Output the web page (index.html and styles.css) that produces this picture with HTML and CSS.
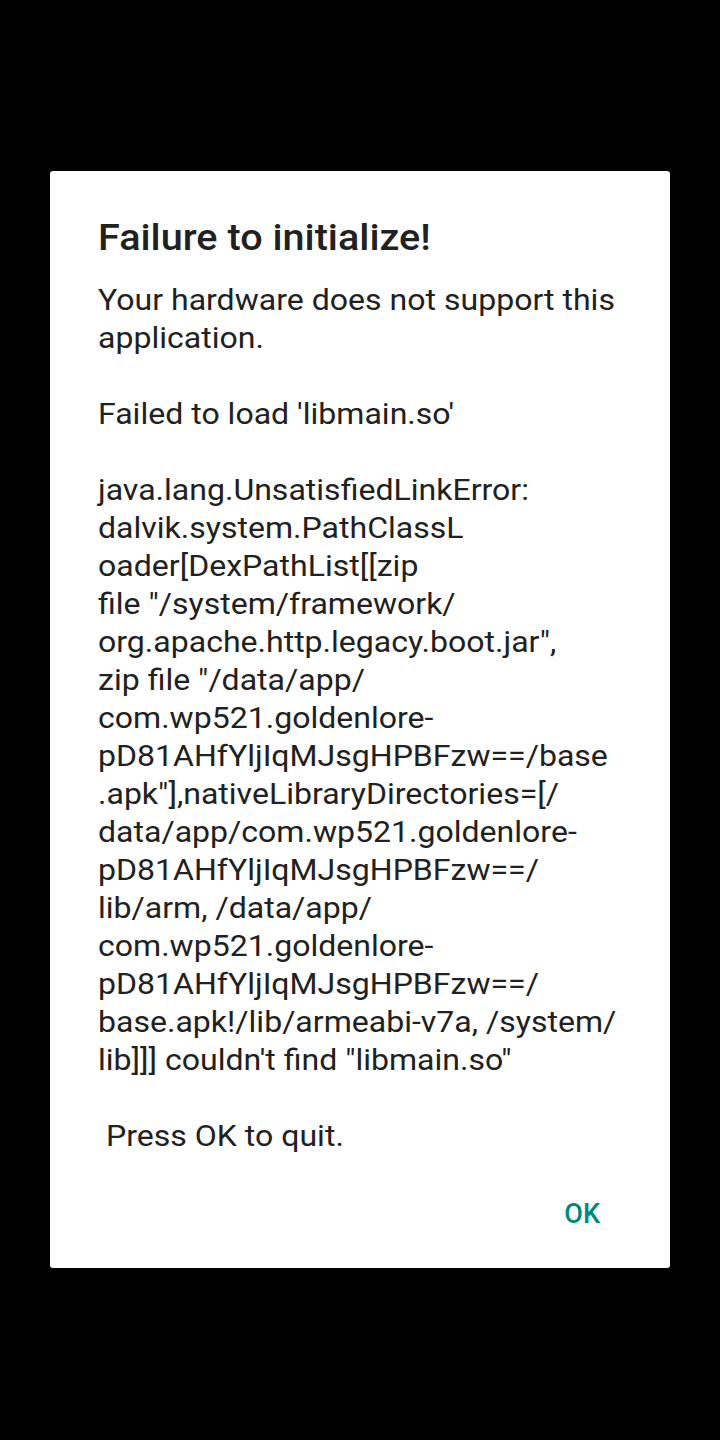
FILE: index.html
```html
<html>
    <head>
        <link rel="stylesheet" href="styles.css">
        <title>Failure to initialize!</title>
    </head>
    <body>
        <div class="dialog">
            <h2 class="title">Failure to initialize!</h2>
            <p class="message">Your hardware does not support this<br>application.<br><br>Failed to load 'libmain.so'<br><br>java.lang.UnsatisfiedLinkError:<br>dalvik.system.PathClassL<br>oader[DexPathList[[zip<br>file "/system/framework/<br>org.apache.http.legacy.boot.jar",<br>zip file "/data/app/<br>com.wp521.goldenlore-<br>pD81AHfYljIqMJsgHPBFzw==/base<br>.apk"],nativeLibraryDirectories=[/<br>data/app/com.wp521.goldenlore-<br>pD81AHfYljIqMJsgHPBFzw==/<br>lib/arm, /data/app/<br>com.wp521.goldenlore-<br>pD81AHfYljIqMJsgHPBFzw==/<br>base.apk!/lib/armeabi-v7a, /system/<br>lib]]] couldn't find "libmain.so"<br><br>&nbsp;Press OK to quit.</p>
            <div class="buttons">
                <button type="button" class="ok">OK</button>
            </div>
        </div>
    </body>
</html>
```
FILE: styles.css
```css
body        {margin: 0;
             background-color: black;
             font-family: Roboto, "Noto Sans", sans-serif;
             height: 1440px;
             display: flex;
             justify-content: center;
             align-items: flex-start;}
.dialog     {margin-top: 171px;
             width: 620px;
             height: 1097px;
             box-sizing: border-box;
             background-color: white;
             border-radius: 3px;
             padding: 0 48px;
             display: flex;
             flex-direction: column;}
.title      {margin: 43px 0 0 0;
             font-size: 36px;
             font-weight: 500;
             line-height: 48px;
             color: #212121;
             transform: scaleX(1.1);
             transform-origin: left;}
.message    {margin: 19px 0 0 0;
             font-size: 29px;
             line-height: 38px;
             color: #212121;
             white-space: nowrap;
             transform: scaleX(1.105);
             transform-origin: left;}
.buttons    {margin-top: auto;
             display: flex;
             justify-content: flex-end;
             padding-bottom: 38px;}
.ok         {border: none;
             background: none;
             font-family: Roboto, sans-serif;
             font-weight: 500;
             font-size: 27px;
             color: #00897b;
             padding: 0;
             margin-right: 22px;}
```
